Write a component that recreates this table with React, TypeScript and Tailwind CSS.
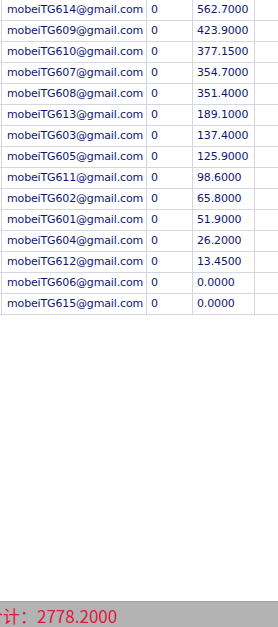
import React from "react";

const rows: [string, string, string][] = [
  ["mobeiTG614@gmail.com", "0", "562.7000"],
  ["mobeiTG609@gmail.com", "0", "423.9000"],
  ["mobeiTG610@gmail.com", "0", "377.1500"],
  ["mobeiTG607@gmail.com", "0", "354.7000"],
  ["mobeiTG608@gmail.com", "0", "351.4000"],
  ["mobeiTG613@gmail.com", "0", "189.1000"],
  ["mobeiTG603@gmail.com", "0", "137.4000"],
  ["mobeiTG605@gmail.com", "0", "125.9000"],
  ["mobeiTG611@gmail.com", "0", "98.6000"],
  ["mobeiTG602@gmail.com", "0", "65.8000"],
  ["mobeiTG601@gmail.com", "0", "51.9000"],
  ["mobeiTG604@gmail.com", "0", "26.2000"],
  ["mobeiTG612@gmail.com", "0", "13.4500"],
  ["mobeiTG606@gmail.com", "0", "0.0000"],
  ["mobeiTG615@gmail.com", "0", "0.0000"],
];

export default function App() {
  return (
    <div className="h-[627px] w-[278px] flex flex-col bg-white overflow-hidden">
      <div
        className="flex flex-col text-[11px] tracking-[-0.15px] text-[#0f1870]"
        style={{ fontFamily: '"DejaVu Sans", Verdana, sans-serif' }}
      >
        {rows.map((r, i) => (
          <div key={i} className="flex h-[21px] border-b border-[#d6d6e2]">
            <div className="w-px" />
            <div className="w-[146px] border-l border-r border-[#d6d6e2] pl-[5px] flex items-center whitespace-nowrap overflow-hidden">
              {r[0]}
            </div>
            <div className="w-[46px] border-r border-[#d6d6e2] pl-[4px] flex items-center">
              {r[1]}
            </div>
            <div className="w-[62px] border-r border-[#d6d6e2] pl-[4px] flex items-center">
              {r[2]}
            </div>
            <div className="flex-1" />
          </div>
        ))}
      </div>
      <div className="flex-1" />
      <div className="h-[26px] border-t border-[#a2a2aa] bg-[#b3b3b3] flex items-center overflow-hidden">
        <span
          className="ml-[-14px] mt-[2px] whitespace-nowrap text-[17px] leading-none text-[#e0173f]"
          style={{ fontFamily: '"Noto Sans CJK SC", sans-serif' }}
        >
          合计：2778.2000
        </span>
      </div>
    </div>
  );
}
